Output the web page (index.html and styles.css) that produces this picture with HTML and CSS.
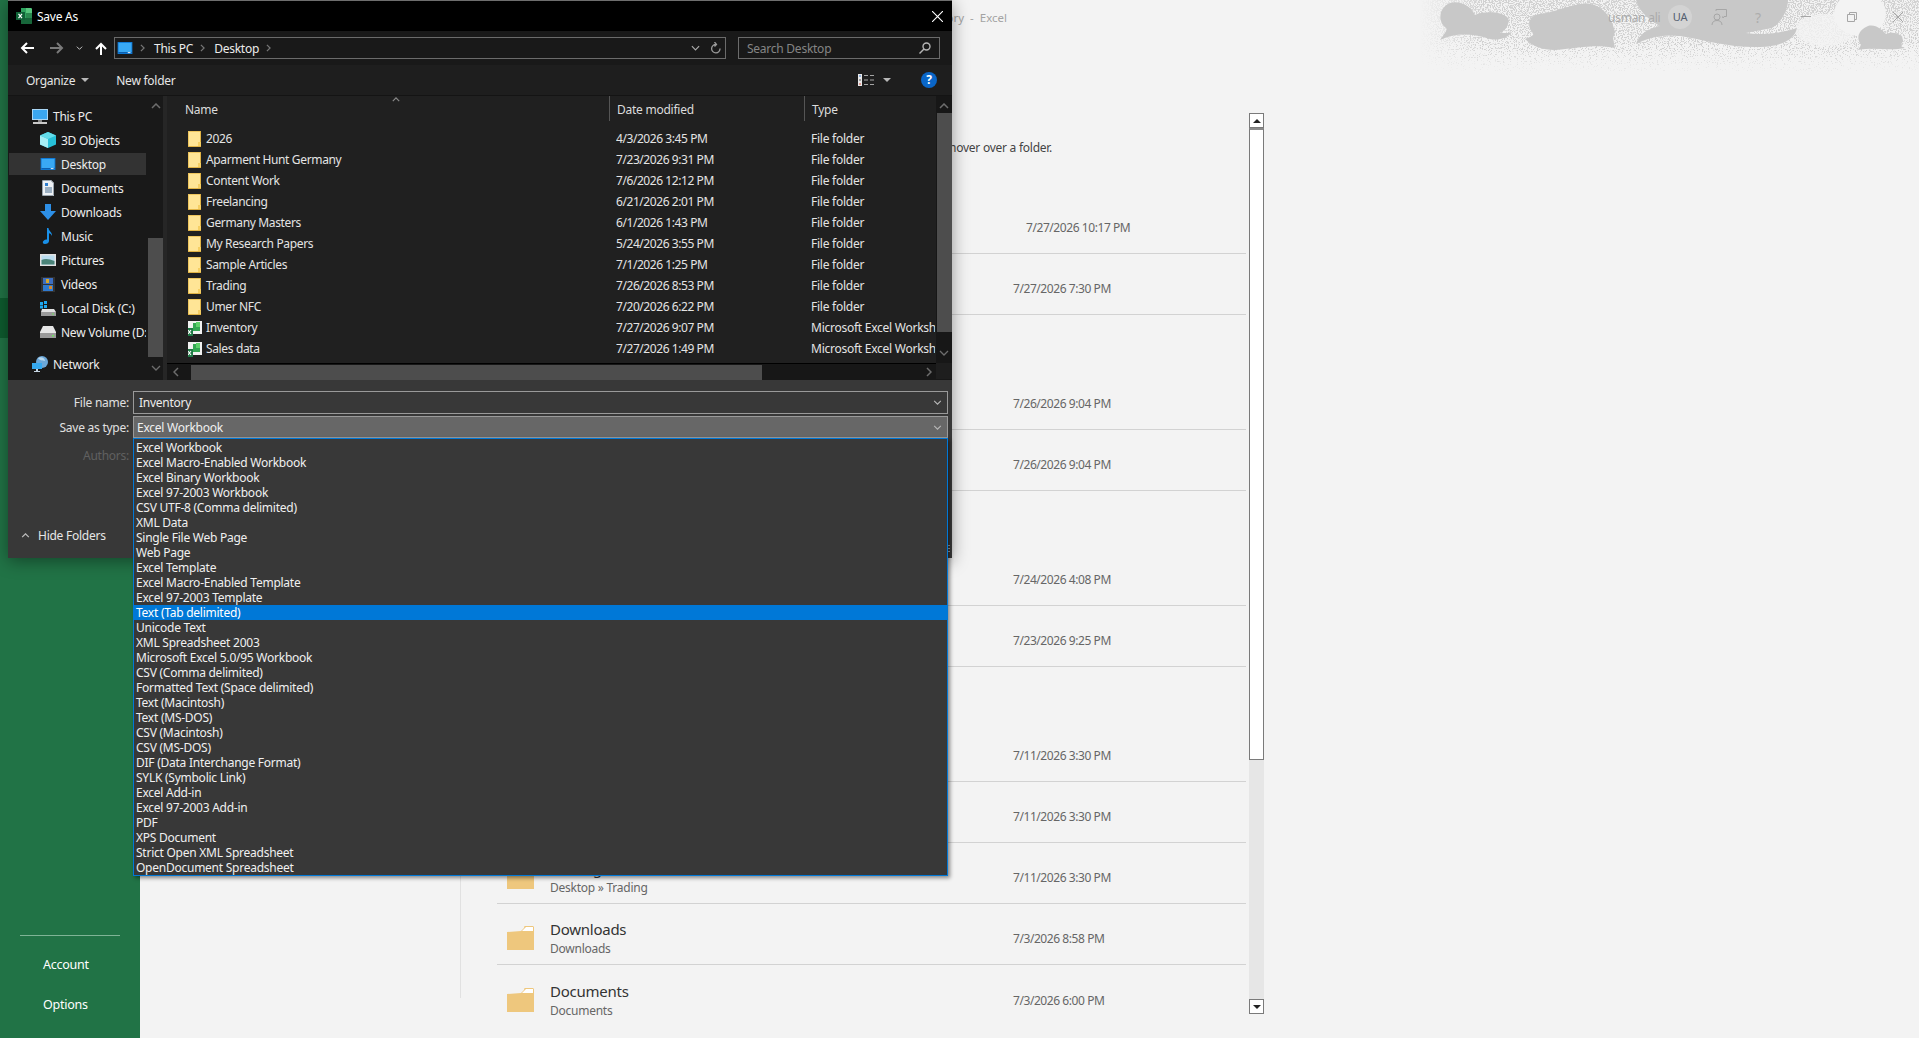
FILE: index.html
```html
<!doctype html>
<html lang="en">
<head>
    <meta charset="UTF-8">
    <title>Save As - Excel</title>
    <link rel="stylesheet" href="styles.css">
</head>
<body>

<svg class="defs" xmlns="http://www.w3.org/2000/svg">
    <symbol id="i-folder" viewBox="0 0 13 16">
        <path d="M0 0h12.500v16H0z" fill="#ffe596"/>
        <path d="M0 0h12.500v1H0zM0 0h1v16H0z" fill="#efc65e"/>
        <path d="M0 15h13v1H0zM12 0h1v16h-1z" fill="#e2b445"/>
        <path d="M10 11h3v4h-3z" fill="#f6cf63"/>
    </symbol>
    <symbol id="i-xlsx" viewBox="0 0 16 16">
        <path d="M1 1h15v13H1z" fill="#f2f2f2"/>
        <path d="M7 3h3v4h3V3h1v8H7z" fill="#33a853"/>
        <path d="M10 2h4v5h-4z" fill="#5fd26c"/>
        <path d="M0 8h7v8H0z" fill="#1e7a45"/>
        <path d="M2 10l3 4M5 10l-3 4" stroke="#fff" stroke-width="1.1"/>
    </symbol>
    <symbol id="i-desktop" viewBox="0 0 16 13">
        <path d="M0 0h16v13H0z" fill="#0f78d4"/>
        <path d="M1 1h14v10H1z" fill="#39a9f4"/>
        <path d="M1 11h14v1H1z" fill="#0b5aa8"/>
        <path d="M11 11.500h3" stroke="#fff"/>
    </symbol>
    <symbol id="i-drive" viewBox="0 0 16 12">
        <path d="M3 0h10l3 6v6H0V6z" fill="#e6e6e6"/>
        <path d="M0 7h16v5H0z" fill="#9a9a9a"/>
        <path d="M12 9h2v1.500h-2z" fill="#6fe05f"/>
    </symbol>
    <symbol id="i-folder-wide" viewBox="0 0 27 24">
        <path d="M0 6l14-1 3-3 .5-2H26l1 1v23H0z" fill="#eec77d"/>
        <path d="M17 3l2-2h7v4H15z" fill="#fff"/>
    </symbol>
    <symbol id="i-chev-down" viewBox="0 0 10 6">
        <path d="M1 1l4 4 4-4" fill="none" stroke="currentColor" stroke-width="1.300"/>
    </symbol>
    <symbol id="i-chev-up" viewBox="0 0 10 6">
        <path d="M1 5l4-4 4 4" fill="none" stroke="currentColor" stroke-width="1.500"/>
    </symbol>
    <symbol id="i-chev-right" viewBox="0 0 6 10">
        <path d="M1 1l4 4-4 4" fill="none" stroke="currentColor" stroke-width="1.500"/>
    </symbol>
    <symbol id="i-caret" viewBox="0 0 8 4">
        <path d="M0 0h8L4 4z" fill="currentColor"/>
    </symbol>
</svg>

<div class="app">
    <aside class="sidebar">
        <div class="side-current"></div>
        <div class="side-links">
            <a>Account</a>
            <a>Options</a>
        </div>
    </aside>

    <main class="main">
        <svg class="clouds" width="499" height="90" viewBox="0 0 499 90" xmlns="http://www.w3.org/2000/svg">
            <defs>
                <filter id="grain" x="0" y="0" width="100%" height="100%" color-interpolation-filters="sRGB">
                    <feTurbulence type="fractalNoise" baseFrequency="0.85" numOctaves="2" seed="4" result="noise"/>
                    <feComposite in="noise" in2="SourceGraphic" operator="arithmetic" k1="0" k2="1" k3="1" k4="0"/>
                    <feColorMatrix type="matrix" values="0 0 0 0 0.82  0 0 0 0 0.82  0 0 0 0 0.82  0 0 0 10 -8"/>
                </filter>
                <linearGradient id="rise" x1="0" y1="0" x2="0" y2="1">
                    <stop offset="0" stop-color="#000" stop-opacity="0.36"/>
                    <stop offset="0.55" stop-color="#000" stop-opacity="0.3"/>
                    <stop offset="1" stop-color="#000" stop-opacity="0.14"/>
                </linearGradient>
                <linearGradient id="side" x1="0" y1="0" x2="1" y2="0">
                    <stop offset="0" stop-color="#000"/>
                    <stop offset="1" stop-color="#000" stop-opacity="0"/>
                </linearGradient>
                <linearGradient id="down" x1="0" y1="0" x2="0" y2="1">
                    <stop offset="0.7" stop-color="#fff"/>
                    <stop offset="1" stop-color="#fff" stop-opacity="0.2"/>
                </linearGradient>
                <mask id="fade-mask">
                    <rect width="499" height="71" fill="url(#down)"/>
                    <rect width="60" height="71" fill="url(#side)"/>
                </mask>
            </defs>
            <g mask="url(#fade-mask)">
                <rect width="499" height="71" fill="url(#rise)" filter="url(#grain)"/>
            </g>
            <ellipse cx="440" cy="14" rx="26" ry="22" fill="#f3f3f3"/>
            <ellipse cx="405" cy="30" rx="30" ry="16" fill="#f3f3f3" opacity="0.8"/>
            <g fill="#c8c8c8">
                <path d="M20 40C24 34 28 30 26 28C18 22 18 8 30 3C42 0 52 8 55 15C62 12 80 10 88 18C90 24 86 30 80 33C86 33 90 33 92 32C88 38 78 41 70 39C50 33 36 33 20 40Z"/>
                <path d="M105 39C112 36 115 36 112 32C106 24 110 15 120 14C135 12 140 8 160 4C175 1 190 10 195 32L193 38L195 48C175 44 160 48 135 50C122 50 112 46 105 39Z"/>
                <path d="M216 44C220 35 224 30 240 26C225 18 218 8 216 0L368 0C368 10 362 22 352 28L326 33C345 36 365 32 377 28C375 38 365 46 340 47C310 48 285 40 260 36C240 34 228 38 216 44Z"/>
                <path d="M438 50L441 45C436 38 438 30 448 26C456 24 462 30 466 34C474 31 483 34 483 41C482 44 478 46 485 48C470 51 455 47 438 50Z"/>
            </g>
        </svg>

        <header class="app-title">
            <span class="doc-title">Inventory&nbsp; -&nbsp; Excel</span>
            <span class="user-name">usman ali</span>
            <span class="avatar">UA</span>
            <svg class="feedback" width="16" height="16" viewBox="0 0 16 16" fill="none" stroke="#a6a6a6" xmlns="http://www.w3.org/2000/svg">
                <circle cx="6" cy="8" r="3"/>
                <path d="M1 16c0-3 2-4.500 5-4.500s5 1.500 5 4.500M5 2V.5h10.500v7H13l-1 1.500-.5-1.500"/>
            </svg>
            <span class="help-mark">?</span>
            <svg class="win-btn win-min" width="10" height="10" viewBox="0 0 10 10" stroke="#a6a6a6" xmlns="http://www.w3.org/2000/svg"><path d="M0 4.500h10"/></svg>
            <svg class="win-btn" width="10" height="10" viewBox="0 0 10 10" fill="none" stroke="#a6a6a6" xmlns="http://www.w3.org/2000/svg"><path d="M.5 2.500h7v7h-7zM2.500 2.500v-2h7v7h-2"/></svg>
            <svg class="win-btn" width="10" height="10" viewBox="0 0 10 10" stroke="#a6a6a6" xmlns="http://www.w3.org/2000/svg"><path d="M0 0l10 10M10 0L0 10"/></svg>
        </header>

        <div class="content">
            <div class="pins"></div>
            <section class="files">
                <p class="hint">hover over a folder.</p>
                <div class="row row-pinned"><span class="when">7/27/2026 10:17 PM</span></div>
                <div class="row"><span class="when">7/27/2026 7:30 PM</span></div>
                <div class="row row-tall"><span class="when">7/26/2026 9:04 PM</span></div>
                <div class="row"><span class="when">7/26/2026 9:04 PM</span></div>
                <div class="row row-tall"><span class="when">7/24/2026 4:08 PM</span></div>
                <div class="row"><span class="when">7/23/2026 9:25 PM</span></div>
                <div class="row row-tall"><span class="when">7/11/2026 3:30 PM</span></div>
                <div class="row"><span class="when">7/11/2026 3:30 PM</span></div>
                <div class="row">
                    <svg class="row-icon"><use href="#i-folder-wide"/></svg>
                    <div class="row-name"><b>Trading</b><span>Desktop » Trading</span></div>
                    <span class="when">7/11/2026 3:30 PM</span>
                </div>
                <div class="row">
                    <svg class="row-icon"><use href="#i-folder-wide"/></svg>
                    <div class="row-name"><b>Downloads</b><span>Downloads</span></div>
                    <span class="when">7/3/2026 8:58 PM</span>
                </div>
                <div class="row row-last">
                    <svg class="row-icon"><use href="#i-folder-wide"/></svg>
                    <div class="row-name"><b>Documents</b><span>Documents</span></div>
                    <span class="when">7/3/2026 6:00 PM</span>
                </div>
            </section>
            <div class="page-scroll">
                <div class="page-arrow"><svg width="8" height="4"><use href="#i-caret" class="flip"/></svg></div>
                <div class="page-thumb"></div>
                <div class="page-track"></div>
                <div class="page-arrow"><svg width="8" height="4"><use href="#i-caret"/></svg></div>
            </div>
        </div>
    </main>
</div>

<!-- the dialog sits over the excel window -->
<div class="dialog">
    <div class="dlg-title">
        <svg width="16" height="16" viewBox="0 0 16 16" xmlns="http://www.w3.org/2000/svg">
            <path d="M5 0h10l1 1v14l-1 1H5z" fill="#2fa35f"/>
            <path d="M10 0h5l1 1v4h-6z" fill="#57c57d"/>
            <path d="M10 5h6v5h-6z" fill="#2a8a4f"/>
            <path d="M5 10h11v5l-1 1H5z" fill="#17663a"/>
            <path d="M0 4h9v8H0z" fill="#0f6236"/>
            <path d="M2.500 5.800l3.500 4.400M6 5.800l-3.500 4.400" stroke="#fff" stroke-width="1.200"/>
        </svg>
        <span>Save As</span>
        <svg class="dlg-close" width="11" height="11" viewBox="0 0 11 11" stroke="#fff" xmlns="http://www.w3.org/2000/svg"><path d="M0 0l11 11M11 0L0 11" stroke-width="1.100"/></svg>
    </div>

    <div class="dlg-nav">
        <svg class="nav-arrow" width="14" height="12" viewBox="0 0 14 12" fill="none" stroke="#fff" stroke-width="2" xmlns="http://www.w3.org/2000/svg"><path d="M14 6H2M7 1L2 6l5 5"/></svg>
        <svg class="nav-arrow nav-fwd" width="14" height="12" viewBox="0 0 14 12" fill="none" stroke="#7a7a7a" stroke-width="2" xmlns="http://www.w3.org/2000/svg"><path d="M0 6h12M7 1l5 5-5 5"/></svg>
        <svg class="nav-recent" width="7" height="4"><use href="#i-chev-down"/></svg>
        <svg class="nav-up" width="12" height="13" viewBox="0 0 12 13" fill="none" stroke="#fff" stroke-width="2" xmlns="http://www.w3.org/2000/svg"><path d="M6 13V2M1 7l5-5 5 5"/></svg>
        <div class="address">
            <svg width="16" height="12"><use href="#i-desktop"/></svg>
            <svg class="crumb-sep" width="5" height="8"><use href="#i-chev-right"/></svg>
            <span>This PC</span>
            <svg class="crumb-sep" width="5" height="8"><use href="#i-chev-right"/></svg>
            <span>Desktop</span>
            <svg class="crumb-sep" width="5" height="8"><use href="#i-chev-right"/></svg>
            <svg class="addr-drop" width="9" height="6"><use href="#i-chev-down"/></svg>
            <svg class="addr-refresh" width="11" height="12" viewBox="0 0 11 12" fill="none" stroke="#9a9a9a" stroke-width="1.300" xmlns="http://www.w3.org/2000/svg"><path d="M6 2.500A4.200 4.200 0 1 0 10 6.500M4.500 0l2 2.500-2 2"/></svg>
        </div>
        <div class="search">
            <span>Search Desktop</span>
            <svg width="12" height="12" viewBox="0 0 12 12" fill="none" stroke="#b5b5b5" stroke-width="1.400" xmlns="http://www.w3.org/2000/svg"><circle cx="7.500" cy="4.500" r="3.500"/><path d="M5 7l-4.500 4.500"/></svg>
        </div>
    </div>

    <div class="dlg-tools">
        <span class="tool">Organize</span>
        <svg class="tool-caret" width="8" height="4"><use href="#i-caret"/></svg>
        <span class="tool tool-new">New folder</span>
        <svg class="view-icon" width="17" height="12" viewBox="0 0 17 12" xmlns="http://www.w3.org/2000/svg">
            <path d="M0 0h4v12H0z" fill="#e8e8e8"/>
            <path d="M1 1.500h2v1H1z" fill="#3a7bd5"/>
            <path d="M1 5.500h2v1H1z" fill="#555"/>
            <path d="M1 9.500h2v1H1z" fill="#d64a3a"/>
            <path d="M6 1.500h4M12 1.500h4M6 6h4M12 6h4M6 10.500h4M12 10.500h4" stroke="#a5a5a5"/>
        </svg>
        <svg class="tool-caret view-caret" width="8" height="4"><use href="#i-caret"/></svg>
        <span class="help-dot">?</span>
    </div>

    <div class="dlg-middle">
        <nav class="tree">
            <ul class="tree-list">
                <li class="tree-root">
                    <svg width="16" height="15" viewBox="0 0 16 15" xmlns="http://www.w3.org/2000/svg"><path d="M0 0h16v11H0z" fill="#a9d6f5"/><path d="M1 1h14v9H1z" fill="#3aa6f0"/><path d="M6 11h4v2H6z" fill="#888"/><path d="M1 13h14v2H1z" fill="#c9c9c9"/></svg>
                    <span>This PC</span>
                </li>
                <li>
                    <svg width="16" height="16" viewBox="0 0 16 16" xmlns="http://www.w3.org/2000/svg"><path d="M8 0l8 3.500v9L8 16l-8-3.500v-9z" fill="#27c0d8"/><path d="M0 3.500L8 7v9L0 12.500z" fill="#a6eef5"/><path d="M8 0l8 3.500L8 7 0 3.500z" fill="#63dcea"/></svg>
                    <span>3D Objects</span>
                </li>
                <li class="active">
                    <svg width="16" height="12"><use href="#i-desktop"/></svg>
                    <span>Desktop</span>
                </li>
                <li>
                    <svg width="16" height="16" viewBox="0 0 12 16" xmlns="http://www.w3.org/2000/svg"><path d="M1 0h8l3 3v13H1z" fill="#eef1f4"/><path d="M0.500 0.500h8.300l2.700 2.700v12.300H.5z" fill="none" stroke="#9aa4ad"/><path d="M3 3h3v3H3z" fill="#2f7fd0"/><path d="M3 8h7M3 10h7M3 12h7" stroke="#4a6f8f"/></svg>
                    <span>Documents</span>
                </li>
                <li>
                    <svg width="16" height="16" viewBox="0 0 16 16" xmlns="http://www.w3.org/2000/svg"><path d="M5 0h6v7h5l-8 9-8-9h5z" fill="#2d8fe6"/></svg>
                    <span>Downloads</span>
                </li>
                <li>
                    <svg width="16" height="16" viewBox="0 0 16 16" xmlns="http://www.w3.org/2000/svg"><path d="M7 0h1.500c0 3 4 4 3.500 8-.5-1.500-2-2.500-3-2.700V13c0 2-2 3-4 3s-2.500-1.500-2-2.500S5 11 7 11.500z" fill="#1990e8"/></svg>
                    <span>Music</span>
                </li>
                <li>
                    <svg width="16" height="12" viewBox="0 0 16 12" xmlns="http://www.w3.org/2000/svg"><path d="M0 0h16v12H0z" fill="#e2e2e2"/><path d="M1.500 1.500h13v9h-13z" fill="#b9dcef"/><path d="M1.500 6c4-2 8-1 13 1v3.500h-13z" fill="#4a8378"/></svg>
                    <span>Pictures</span>
                </li>
                <li>
                    <svg width="16" height="15" viewBox="0 0 16 15" xmlns="http://www.w3.org/2000/svg"><path d="M1 0h14v15H1z" fill="#333"/><path d="M3 1h10v6H3z" fill="#3c6ec2"/><path d="M3 8h10v6H3z" fill="#2f7ad0"/><path d="M6 2h3v4H6z" fill="#d4a72c"/><path d="M9 9h3v3H9z" fill="#d88a2a"/></svg>
                    <span>Videos</span>
                </li>
                <li>
                    <svg width="16" height="15" viewBox="0 0 16 15" xmlns="http://www.w3.org/2000/svg"><path d="M0 1h3v3H0zM4 0h3v3H4zM0 4.500h3v3H0zM4 4h3v3H4z" fill="#1ea8f0"/><path d="M2 8h12l2 3v4H1v-4z" fill="#e2e2e2"/><path d="M1 11h15v4H1z" fill="#9a9a9a"/><path d="M12 12.500h2v1h-2z" fill="#6fe05f"/></svg>
                    <span>Local Disk (C:)</span>
                </li>
                <li>
                    <svg width="16" height="12"><use href="#i-drive"/></svg>
                    <span>New Volume (D:)</span>
                </li>
                <li class="tree-root tree-gap">
                    <svg width="16" height="16" viewBox="0 0 16 16" xmlns="http://www.w3.org/2000/svg"><circle cx="10" cy="6" r="6" fill="#6ba7d8"/><path d="M6 2c3-2 7 0 7 3-3-1-5 0-7-3z" fill="#b8d8ee"/><path d="M0 7h10v6H0z" fill="#35a8ee"/><path d="M4 13h2v2H4zM2 15h6v1H2z" fill="#c4d4e0"/></svg>
                    <span>Network</span>
                </li>
            </ul>
            <div class="vscroll">
                <svg class="arrow" width="10" height="6"><use href="#i-chev-up"/></svg>
                <div class="tree-thumb"></div>
                <svg class="arrow" width="10" height="6"><use href="#i-chev-down"/></svg>
            </div>
        </nav>

        <div class="listing">
            <div class="listing-main">
                <div class="columns">
                    <svg class="sort-mark" width="8" height="5"><use href="#i-chev-up"/></svg>
                    <span class="col col-name">Name</span>
                    <span class="col col-date">Date modified</span>
                    <span class="col col-type">Type</span>
                </div>
                <div class="entries">
                    <div class="entry"><span class="entry-name"><svg width="13" height="16"><use href="#i-folder"/></svg>2026</span><span>4/3/2026 3:45 PM</span><span>File folder</span></div>
                    <div class="entry"><span class="entry-name"><svg width="13" height="16"><use href="#i-folder"/></svg>Aparment Hunt Germany</span><span>7/23/2026 9:31 PM</span><span>File folder</span></div>
                    <div class="entry"><span class="entry-name"><svg width="13" height="16"><use href="#i-folder"/></svg>Content Work</span><span>7/6/2026 12:12 PM</span><span>File folder</span></div>
                    <div class="entry"><span class="entry-name"><svg width="13" height="16"><use href="#i-folder"/></svg>Freelancing</span><span>6/21/2026 2:01 PM</span><span>File folder</span></div>
                    <div class="entry"><span class="entry-name"><svg width="13" height="16"><use href="#i-folder"/></svg>Germany Masters</span><span>6/1/2026 1:43 PM</span><span>File folder</span></div>
                    <div class="entry"><span class="entry-name"><svg width="13" height="16"><use href="#i-folder"/></svg>My Research Papers</span><span>5/24/2026 3:55 PM</span><span>File folder</span></div>
                    <div class="entry"><span class="entry-name"><svg width="13" height="16"><use href="#i-folder"/></svg>Sample Articles</span><span>7/1/2026 1:25 PM</span><span>File folder</span></div>
                    <div class="entry"><span class="entry-name"><svg width="13" height="16"><use href="#i-folder"/></svg>Trading</span><span>7/26/2026 8:53 PM</span><span>File folder</span></div>
                    <div class="entry"><span class="entry-name"><svg width="13" height="16"><use href="#i-folder"/></svg>Umer NFC</span><span>7/20/2026 6:22 PM</span><span>File folder</span></div>
                    <div class="entry"><span class="entry-name"><svg class="xl" width="16" height="16"><use href="#i-xlsx"/></svg>Inventory</span><span>7/27/2026 9:07 PM</span><span>Microsoft Excel Worksh</span></div>
                    <div class="entry"><span class="entry-name"><svg class="xl" width="16" height="16"><use href="#i-xlsx"/></svg>Sales data</span><span>7/27/2026 1:49 PM</span><span>Microsoft Excel Worksh</span></div>
                </div>
                <div class="hscroll">
                    <svg class="arrow" width="6" height="10"><use href="#i-chev-right" class="flip-x"/></svg>
                    <div class="h-thumb"></div>
                    <svg class="arrow" width="6" height="10"><use href="#i-chev-right"/></svg>
                </div>
            </div>
            <div class="list-scroll">
                <svg class="arrow" width="10" height="6"><use href="#i-chev-up"/></svg>
                <div class="list-thumb"></div>
                <svg class="arrow" width="10" height="6"><use href="#i-chev-down"/></svg>
                <div class="corner"></div>
            </div>
        </div>
    </div>

    <div class="dlg-form">
        <div class="form-row form-name">
            <label>File name:</label>
            <div class="field"><span>Inventory</span><svg width="9" height="5"><use href="#i-chev-down"/></svg></div>
        </div>
        <div class="form-row form-type">
            <label>Save as type:</label>
            <div class="field field-open"><span>Excel Workbook</span><svg width="9" height="5"><use href="#i-chev-down"/></svg></div>
        </div>
        <div class="form-row form-authors"><label>Authors:</label></div>
        <div class="hide-folders">
            <svg width="9" height="5"><use href="#i-chev-up"/></svg>
            <span>Hide Folders</span>
        </div>
        <div class="grip"></div>
    </div>
</div>

<ul class="type-list">
    <li>Excel Workbook</li>
    <li>Excel Macro-Enabled Workbook</li>
    <li>Excel Binary Workbook</li>
    <li>Excel 97-2003 Workbook</li>
    <li>CSV UTF-8 (Comma delimited)</li>
    <li>XML Data</li>
    <li>Single File Web Page</li>
    <li>Web Page</li>
    <li>Excel Template</li>
    <li>Excel Macro-Enabled Template</li>
    <li>Excel 97-2003 Template</li>
    <li class="selected">Text (Tab delimited)</li>
    <li>Unicode Text</li>
    <li>XML Spreadsheet 2003</li>
    <li>Microsoft Excel 5.0/95 Workbook</li>
    <li>CSV (Comma delimited)</li>
    <li>Formatted Text (Space delimited)</li>
    <li>Text (Macintosh)</li>
    <li>Text (MS-DOS)</li>
    <li>CSV (Macintosh)</li>
    <li>CSV (MS-DOS)</li>
    <li>DIF (Data Interchange Format)</li>
    <li>SYLK (Symbolic Link)</li>
    <li>Excel Add-in</li>
    <li>Excel 97-2003 Add-in</li>
    <li>PDF</li>
    <li>XPS Document</li>
    <li>Strict Open XML Spreadsheet</li>
    <li>OpenDocument Spreadsheet</li>
</ul>

</body>
</html>
```

FILE: styles.css
```css
* {
    box-sizing: border-box;
}

html, body {
    margin: 0;
    height: 100%;
    overflow: hidden;
}

body {
    background: #f3f3f3;
    font-family: "Noto Sans", "Open Sans", sans-serif;
    font-size: 12px;
    letter-spacing: -0.25px;
    color: #444;
}

ul {
    list-style: none;
    margin: 0;
    padding: 0;
}

svg {
    display: block;
    flex: none;
}

.defs {
    position: absolute;
    width: 0;
    height: 0;
}

.flip {
    transform: rotate(180deg);
    transform-origin: 4px 2px;
}

.flip-x {
    transform: rotate(180deg);
    transform-origin: 3px 5px;
}

/* excel behind the dialog */
.app {
    display: flex;
    height: 1038px;
}

.sidebar {
    width: 140px;
    flex: none;
    background: #217346;
    display: flex;
    flex-direction: column;
    padding: 0 20px 13px;
}

.side-current {
    height: 40px;
    margin: 298px -20px auto;
    background: #0e5c2f;
}

.side-links {
    border-top: 1px solid #7fb496;
    padding-top: 9px;
}

.side-links a {
    display: block;
    height: 40px;
    line-height: 40px;
    padding-left: 23px;
    color: #fff;
    font-size: 12.500px;
}

.main {
    flex: 1;
    position: relative;
    min-width: 0;
}

.clouds {
    position: absolute;
    right: 0;
    top: 0;
}

.app-title {
    position: relative;
    height: 34px;
    display: flex;
    align-items: center;
    color: #a0a0a0;
}

.doc-title {
    width: 867px;
    flex: none;
    text-align: right;
    white-space: nowrap;
    color: #a3a3a3;
    font-size: 11.500px;
    letter-spacing: 0;
}

.user-name {
    margin-left: 601px;
    width: 60px;
    font-size: 12px;
    white-space: nowrap;
    color: #ababab;
}

.avatar {
    width: 24px;
    height: 24px;
    border-radius: 50%;
    background: #d3d3d3;
    color: #556070;
    font-size: 11px;
    line-height: 24px;
    text-align: center;
}

.feedback {
    margin-left: 19px;
}

.help-mark {
    margin-left: 24px;
    width: 14px;
    text-align: center;
    font-size: 14px;
    color: #adadad;
}

.win-btn {
    margin-left: 36px;
}

.content {
    margin-top: 79px;
    display: flex;
    height: 901px;
}

.pins {
    width: 321px;
    height: 885px;
    flex: none;
    border-right: 1px solid #e1e1e1;
}

.files {
    width: 749px;
    margin-left: 36px;
    flex: none;
}

.hint {
    margin: 0 0 0 452px;
    height: 80px;
    padding-top: 26px;
    width: 110px;
    line-height: 18px;
    color: #444;
    white-space: nowrap;
    font-size: 12px;
}

.row {
    height: 61px;
    display: flex;
    align-items: flex-end;
    border-bottom: 1px solid #d2d2d2;
    position: relative;
    padding-left: 516px;
}

.row-tall {
    height: 115px;
}

.row-last {
    border-bottom: 0;
}

.row-pinned {
    padding-left: 529px;
}

.row:has(.row-icon) {
    padding-left: 10px;
}

.row-icon {
    width: 27px;
    height: 24px;
    margin-bottom: 14px;
}

.row-name {
    width: 463px;
    margin-left: 16px;
    margin-bottom: 7px;
}

.row-name b {
    display: block;
    font-weight: 400;
    font-size: 15px;
    line-height: 20px;
    margin-bottom: 2px;
    color: #333;
}

.row-name span {
    display: block;
    line-height: 16px;
    color: #666;
}

.when {
    margin-bottom: 17px;
    line-height: 16px;
    letter-spacing: -0.43px;
    color: #666;
}

.page-scroll {
    width: 15px;
    margin-left: 3px;
    flex: none;
    display: flex;
    flex-direction: column;
}

.page-arrow {
    height: 15px;
    background: #fff;
    border: 1px solid #7a7a7a;
    display: flex;
    align-items: center;
    justify-content: center;
}

.page-thumb {
    height: 632px;
    background: #fff;
    border: 1px solid #7a7a7a;
    border-top-width: 2px;
    border-top-color: #8a8a8a;
}

.page-track {
    flex: 1;
    background: #e6e6e6;
}

.page-arrow svg {
    color: #222;
}

/* save as dialog */
.dialog {
    position: absolute;
    left: 8px;
    top: 0;
    width: 944px;
    height: 558px;
    display: flex;
    flex-direction: column;
    border-top: 1px solid #6e6e6e;
    background: #191919;
    color: #e6e6e6;
    box-shadow: 0 3px 16px rgba(0, 0, 0, 0.4);
}

.dlg-title {
    height: 30px;
    flex: none;
    background: #000;
    display: flex;
    align-items: center;
    padding-left: 8px;
    color: #fff;
}

.dlg-title span {
    margin-left: 5px;
}

.dlg-close {
    margin-left: auto;
    margin-right: 9px;
}

.dlg-nav {
    height: 34px;
    flex: none;
    display: flex;
    align-items: center;
    background: #191919;
    color: #fff;
    padding-left: 12px;
}

.nav-fwd {
    margin-left: 16px;
}

.nav-recent {
    margin-left: 12px;
    color: #ddd;
}

.nav-up {
    margin-left: 12px;
}

.address {
    margin-left: 7px;
    width: 612px;
    height: 22px;
    border: 1px solid #6b6b6b;
    display: flex;
    align-items: center;
    padding-left: 2px;
    color: #ececec;
}

.crumb-sep {
    margin: 0 9px 0 7px;
    color: #777;
}

.addr-drop {
    margin-left: auto;
    color: #aaa;
}

.addr-refresh {
    margin: 0 4px 0 10px;
}

.search {
    margin-left: 12px;
    width: 202px;
    height: 22px;
    border: 1px solid #6b6b6b;
    display: flex;
    align-items: center;
    justify-content: space-between;
    padding: 0 8px;
    color: #858585;
}

.dlg-tools {
    height: 31px;
    flex: none;
    display: flex;
    align-items: center;
    background: #1e1e1e;
    border-bottom: 1px solid #141414;
    padding-left: 18px;
}

.tool {
    color: #e6e6e6;
}

.tool-caret {
    margin-left: 6px;
    color: #b8b8b8;
}

.tool-new {
    margin-left: 27px;
}

.view-icon {
    margin-left: auto;
}

.view-caret {
    margin-left: 8px;
}

.help-dot {
    margin: 0 15px 0 30px;
    width: 16px;
    height: 16px;
    border-radius: 50%;
    background: #0a66c8;
    color: #fff;
    font-weight: 700;
    font-size: 12px;
    line-height: 16px;
    text-align: center;
}

.dlg-middle {
    height: 284px;
    flex: none;
    display: flex;
}

.tree {
    width: 159px;
    flex: none;
    display: flex;
    background: #191919;
    border-right: 4px solid #262626;
    padding-left: 1px;
}

.tree-list {
    width: 139px;
    padding-top: 8px;
    overflow: hidden;
}

.tree-list li {
    height: 24px;
    display: flex;
    align-items: center;
    gap: 5px;
    padding-left: 31px;
    white-space: nowrap;
    color: #ececec;
}

.tree-list li.tree-root {
    padding-left: 23px;
}

.tree-list li.tree-gap {
    margin-top: 8px;
}

.tree-list li.active {
    background: #333;
    height: 22px;
    margin: 1px 0;
}

.vscroll {
    width: 15px;
    margin-left: 2px;
    display: flex;
    flex-direction: column;
    align-items: center;
    color: #6d6d6d;
    padding-top: 7px;
}

.tree-thumb {
    width: 15px;
    height: 119px;
    margin-top: 129px;
    background: #4d4d4d;
}

.vscroll .arrow:last-child {
    margin-top: 8px;
}

.listing {
    flex: 1;
    display: flex;
    background: #202020;
    min-width: 0;
}

.listing-main {
    flex: 1;
    min-width: 0;
    display: flex;
    flex-direction: column;
}

.columns {
    height: 32px;
    flex: none;
    position: relative;
    color: #dcdcdc;
}

.sort-mark {
    position: absolute;
    left: 225px;
    top: 1px;
    color: #8a8a8a;
}

.col {
    position: absolute;
    top: 0;
    height: 25px;
    line-height: 27px;
}

.col-name {
    left: 18px;
}

.col-date {
    left: 442px;
    padding-left: 7px;
    border-left: 1px solid #555;
}

.col-type {
    left: 637px;
    padding-left: 7px;
    border-left: 1px solid #555;
}

.entries {
    height: 236px;
    flex: none;
    border-bottom: 1px solid #000;
}

.entry {
    height: 21px;
    display: grid;
    grid-template-columns: 428px 195px 124px;
    align-items: center;
    padding-left: 21px;
    white-space: nowrap;
    color: #e4e4e4;
}

.entry span {
    overflow: hidden;
}

.entry span:nth-child(2) {
    letter-spacing: -0.43px;
}

.entry-name {
    display: flex;
    align-items: center;
    gap: 5px;
    letter-spacing: -0.35px;
}

.entry-name .xl {
    margin: 0 -1px 0 -2px;
}

.hscroll {
    flex: 1;
    display: flex;
    align-items: center;
    background: #171717;
    color: #6d6d6d;
    padding-left: 6px;
}

.h-thumb {
    width: 571px;
    height: 15px;
    margin: 0 164px 0 12px;
    background: #4d4d4d;
}

.list-scroll {
    width: 16px;
    flex: none;
    display: flex;
    flex-direction: column;
    align-items: center;
    background: #171717;
    color: #6d6d6d;
    padding-top: 7px;
}

.list-thumb {
    width: 15px;
    height: 219px;
    margin-top: 4px;
    background: #4d4d4d;
}

.list-scroll .arrow:nth-child(3) {
    margin-top: 18px;
}

.corner {
    width: 16px;
    height: 16px;
    margin-top: 7px;
    background: #1e1e1e;
}

.dlg-form {
    flex: 1;
    position: relative;
    background: #383838;
    padding-top: 11px;
}

.form-row {
    display: flex;
    align-items: center;
    height: 22px;
}

.form-row label {
    width: 121px;
    flex: none;
    text-align: right;
    color: #e0e0e0;
}

.form-name {
    height: 23px;
    margin-bottom: 2px;
}

.field {
    width: 815px;
    margin-left: 4px;
    height: 100%;
    border: 1px solid #9a9a9a;
    display: flex;
    align-items: center;
    justify-content: space-between;
    padding: 0 5px 0 5px;
    color: #ececec;
}

.field-open {
    background: #676767;
    padding-left: 3px;
    color: #f0f0f0;
}

.field svg {
    color: #b8b8b8;
}

.form-authors {
    margin-top: 6px;
}

.form-authors label {
    color: #606060;
}

.hide-folders {
    position: absolute;
    left: 13px;
    top: 147px;
    display: flex;
    align-items: center;
    gap: 8px;
    color: #e6e6e6;
}

.hide-folders svg {
    color: #bdbdbd;
}

.grip {
    position: absolute;
    right: 2px;
    bottom: 5px;
    width: 3px;
    height: 8px;
    background: repeating-linear-gradient(#a0a0a0 0 1px, transparent 1px 3px);
}

/* open combo list, hangs out of the dialog */
.type-list {
    position: absolute;
    left: 133px;
    top: 438px;
    width: 815px;
    height: 438px;
    padding-top: 1px;
    background: #383838;
    border: 1px solid #0078d7;
    box-shadow: 2px 2px 4px rgba(0, 0, 0, 0.45);
    color: #f0f0f0;
}

.type-list li {
    height: 15px;
    line-height: 15px;
    padding-left: 2px;
    white-space: nowrap;
}

.type-list li.selected {
    background: #0078d7;
    color: #fff;
}
```
